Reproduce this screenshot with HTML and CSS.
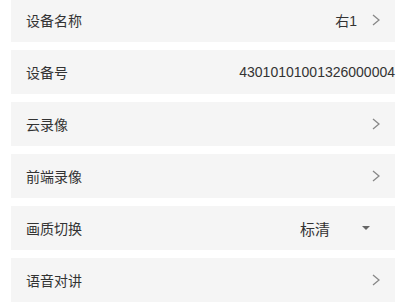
FILE: index.html
```html
<!DOCTYPE html>
<html lang="zh-CN">
<head>
    <meta charset="UTF-8">
    <meta name="viewport" content="width=device-width, initial-scale=1.0">
    <title>设备设置</title>
    <link rel="stylesheet" href="styles.css">
</head>
<body>
    <div class="list">
        <div class="item">
            <p class="label">设备名称</p>
            <p class="value">右1</p>
            <svg class="arrow" viewBox="0 0 8 12"><path d="M1 1 L7 6 L1 11" /></svg>
        </div>
        <div class="item">
            <p class="label">设备号</p>
            <p class="value num">43010101001326000004</p>
        </div>
        <div class="item">
            <p class="label">云录像</p>
            <svg class="arrow" viewBox="0 0 8 12"><path d="M1 1 L7 6 L1 11" /></svg>
        </div>
        <div class="item">
            <p class="label">前端录像</p>
            <svg class="arrow" viewBox="0 0 8 12"><path d="M1 1 L7 6 L1 11" /></svg>
        </div>
        <div class="item">
            <p class="label">画质切换</p>
            <p class="value quality">标清</p>
            <span class="caret"></span>
        </div>
        <div class="item">
            <p class="label">语音对讲</p>
            <svg class="arrow" viewBox="0 0 8 12"><path d="M1 1 L7 6 L1 11" /></svg>
        </div>
    </div>
</body>
</html>
```

FILE: styles.css
```css
* {
    margin: 0px;
    padding: 0px;
}
body {
    background: #fff;
    font-family: 'Liberation Sans', 'Noto Sans CJK SC', sans-serif;
    color: #333;
}
.list {
    display: flex;
    flex-direction: column;
    gap: 8px;
    margin-top: -2px;
    padding: 0px 12px 0px 11px;
}
.item {
    height: 44px;
    background: #f5f5f5;
    display: flex;
    align-items: center;
    padding: 0px 15px;
    font-size: 14px;
}
.label {
    flex: 1;
}
.value {
    margin-right: 15px;
}
.num {
    margin-right: -15px;
}
.quality {
    margin-right: 32px;
    font-size: 15px;
}
.arrow {
    width: 8px;
    height: 12px;
    fill: none;
    stroke: #888;
    stroke-width: 1.3;
}
.caret {
    width: 0;
    height: 0;
    border-left: 4px solid transparent;
    border-right: 4px solid transparent;
    border-top: 4px solid #666;
    margin-right: 10px;
}
```
